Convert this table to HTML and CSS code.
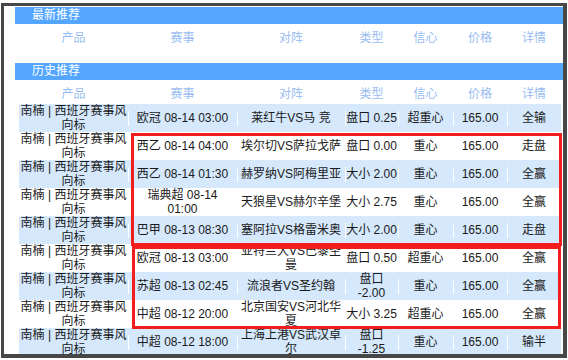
FILE: index.html
```html
<!DOCTYPE html>
<html lang="zh-CN">
<head>
<meta charset="utf-8">
<title>推荐</title>
<link rel="stylesheet" href="styles.css">
</head>
<body>
<div class="frame">
  <div class="bar">最新推荐</div>
  <table class="grid">
    <colgroup><col class="c1"><col class="c2"><col class="c3"><col class="c4"><col class="c5"><col class="c6"><col class="c7"></colgroup>
    <thead><tr><th>产品</th><th>赛事</th><th>对阵</th><th>类型</th><th>信心</th><th>价格</th><th>详情</th></tr></thead>
  </table>

  <div class="bar bar-gap">历史推荐</div>
  <table class="grid">
    <colgroup><col class="c1"><col class="c2"><col class="c3"><col class="c4"><col class="c5"><col class="c6"><col class="c7"></colgroup>
    <thead><tr><th>产品</th><th>赛事</th><th>对阵</th><th>类型</th><th>信心</th><th>价格</th><th>详情</th></tr></thead>
    <tbody>
      <tr class="alt"><td>南楠 | 西班牙赛事风<br>向标</td><td>欧冠 08-14 03:00</td><td>莱红牛VS马 竞</td><td>盘口 0.25</td><td>超重心</td><td>165.00</td><td>全输</td></tr>
      <tr><td>南楠 | 西班牙赛事风<br>向标</td><td>西乙 08-14 04:00</td><td>埃尔切VS萨拉戈萨</td><td>盘口 0.00</td><td>重心</td><td>165.00</td><td>走盘</td></tr>
      <tr class="alt"><td>南楠 | 西班牙赛事风<br>向标</td><td>西乙 08-14 01:30</td><td>赫罗纳VS阿梅里亚</td><td>大小 2.00</td><td>重心</td><td>165.00</td><td>全赢</td></tr>
      <tr><td>南楠 | 西班牙赛事风<br>向标</td><td>瑞典超 08-14<br>01:00</td><td>天狼星VS赫尔辛堡</td><td>大小 2.75</td><td>重心</td><td>165.00</td><td>全赢</td></tr>
      <tr class="alt"><td>南楠 | 西班牙赛事风<br>向标</td><td>巴甲 08-13 08:30</td><td>塞阿拉VS格雷米奥</td><td>大小 2.00</td><td>重心</td><td>165.00</td><td>走盘</td></tr>
      <tr><td>南楠 | 西班牙赛事风<br>向标</td><td>欧冠 08-13 03:00</td><td>亚特兰大VS巴黎圣<br>曼</td><td>盘口 0.50</td><td>超重心</td><td>165.00</td><td>全赢</td></tr>
      <tr class="alt"><td>南楠 | 西班牙赛事风<br>向标</td><td>苏超 08-13 02:45</td><td>流浪者VS圣约翰</td><td>盘口<br>-2.00</td><td>重心</td><td>165.00</td><td>全赢</td></tr>
      <tr><td>南楠 | 西班牙赛事风<br>向标</td><td>中超 08-12 20:00</td><td>北京国安VS河北华<br>夏</td><td>大小 3.25</td><td>超重心</td><td>165.00</td><td>全赢</td></tr>
      <tr class="alt"><td>南楠 | 西班牙赛事风<br>向标</td><td>中超 08-12 18:00</td><td>上海上港VS武汉卓<br>尔</td><td>盘口<br>-1.25</td><td>重心</td><td>165.00</td><td>输半</td></tr>
    </tbody>
  </table>

  <div class="mark mark-a"></div>
  <div class="mark mark-b"></div>
</div>
</body>
</html>
```

FILE: styles.css
```css
html, body {
  margin: 0;
  padding: 0;
  background: #fff;
}

body {
  font-family: "Liberation Sans", "Noto Sans CJK SC", sans-serif;
  font-size: 12px;
  color: #1a1a1a;
}

.frame {
  position: relative;
  margin: 3px 0 0 1px;
  width: 559px;
  height: 348px;
  border-style: solid;
  border-color: #474747;
  border-width: 3px 4px 4px 3px;
  overflow: hidden;
  background: #fff;
}

.bar {
  margin: 1px 0 0 11px;
  height: 17px;
  line-height: 17px;
  padding-left: 17px;
  background: #55a6ff;
  color: #fff;
}

.bar-gap {
  margin-top: 15px;
}

.grid {
  margin-left: 15px;
  width: 542px;
  border-collapse: collapse;
  table-layout: fixed;
}

.c1 { width: 109px; }
.c2 { width: 109px; }
.c3 { width: 108px; }
.c4 { width: 53px; }
.c5 { width: 55px; }
.c6 { width: 54px; }
.c7 { width: 54px; }

.grid th {
  height: 24px;
  padding: 0;
  font-weight: normal;
  color: #98bdf0;
  text-align: center;
}

.grid td {
  height: 28px;
  padding: 0;
  line-height: 14px;
  text-align: center;
  white-space: nowrap;
}

.grid td + td {
  background: linear-gradient(#fff, #fff) left center / 1px 15px no-repeat;
}

.grid tr.alt {
  background: #d5e8fc;
}

.mark {
  position: absolute;
  box-sizing: border-box;
  border: 3px solid #f21d1d;
}

.mark-a {
  left: 127px;
  top: 127px;
  width: 431px;
  height: 113px;
}

.mark-b {
  left: 128px;
  top: 240px;
  width: 429px;
  height: 83px;
}
```
